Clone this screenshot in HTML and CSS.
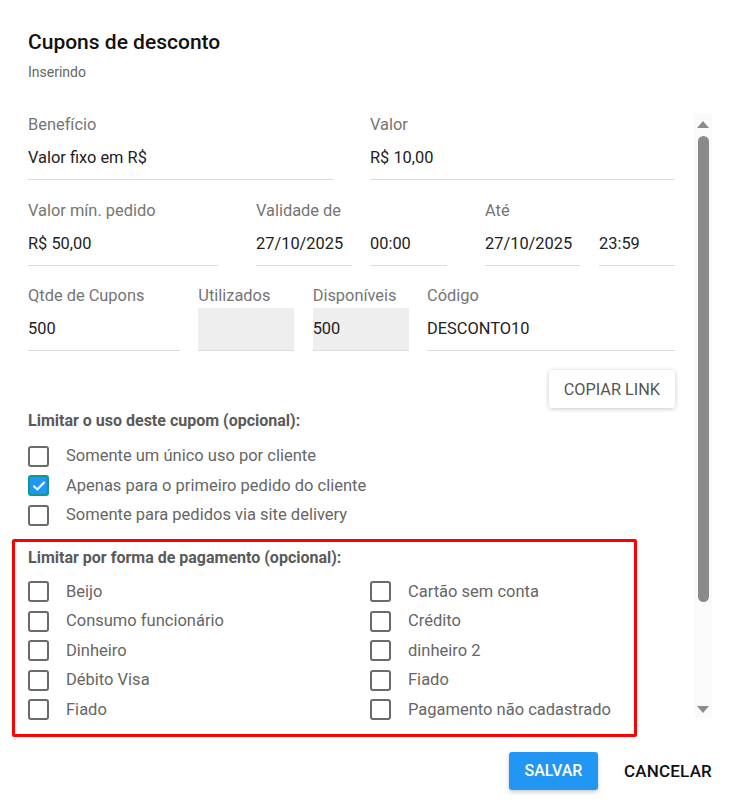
FILE: index.html
```html
<!DOCTYPE html>
<html lang="pt-BR">
<head>
<meta charset="utf-8">
<title>Cupons de desconto</title>
<link rel="stylesheet" href="styles.css">
</head>
<body>
<div class="dialog">
  <div class="head">
    <h1 class="title">Cupons de desconto</h1>
    <div class="subtitle">Inserindo</div>
  </div>

  <div class="body">
    <div class="form">
      <div class="row row-a">
        <div class="field">
          <div class="field-label">Benefício</div>
          <div class="field-input">Valor fixo em R$</div>
        </div>
        <div class="field">
          <div class="field-label">Valor</div>
          <div class="field-input">R$ 10,00</div>
        </div>
      </div>

      <div class="row row-b">
        <div class="field">
          <div class="field-label">Valor mín. pedido</div>
          <div class="field-input">R$ 50,00</div>
        </div>
        <div class="field">
          <div class="field-label">Validade de</div>
          <div class="field-input">27/10/2025</div>
        </div>
        <div class="field">
          <div class="field-label">&nbsp;</div>
          <div class="field-input">00:00</div>
        </div>
        <div class="field">
          <div class="field-label">Até</div>
          <div class="field-input">27/10/2025</div>
        </div>
        <div class="field">
          <div class="field-label">&nbsp;</div>
          <div class="field-input">23:59</div>
        </div>
      </div>

      <div class="row row-c">
        <div class="field">
          <div class="field-label">Qtde de Cupons</div>
          <div class="field-input">500</div>
        </div>
        <div class="field">
          <div class="field-label">Utilizados</div>
          <div class="field-input readonly">&nbsp;</div>
        </div>
        <div class="field">
          <div class="field-label">Disponíveis</div>
          <div class="field-input readonly">500</div>
        </div>
        <div class="field">
          <div class="field-label">Código</div>
          <div class="field-input">DESCONTO10</div>
        </div>
      </div>

      <div class="link-row">
        <button class="btn-raised">COPIAR LINK</button>
      </div>

      <div class="section-title first">Limitar o uso deste cupom (opcional):</div>
      <div class="checks">
        <label class="check-row"><span class="box"></span><span class="check-label">Somente um único uso por cliente</span></label>
        <label class="check-row"><span class="box checked"><svg viewBox="0 0 16 16" width="16" height="16"><path d="M3.2 8.4 L6.4 11.4 L12.8 4.8" fill="none" stroke="#fff" stroke-width="2.1" stroke-linecap="square"/></svg></span><span class="check-label">Apenas para o primeiro pedido do cliente</span></label>
        <label class="check-row"><span class="box"></span><span class="check-label">Somente para pedidos via site delivery</span></label>
      </div>

      <div class="payment">
        <div class="section-title">Limitar por forma de pagamento (opcional):</div>
        <div class="pay-grid">
          <div class="pay-col">
            <label class="check-row"><span class="box"></span><span class="check-label">Beijo</span></label>
            <label class="check-row"><span class="box"></span><span class="check-label">Consumo funcionário</span></label>
            <label class="check-row"><span class="box"></span><span class="check-label">Dinheiro</span></label>
            <label class="check-row"><span class="box"></span><span class="check-label">Débito Visa</span></label>
            <label class="check-row"><span class="box"></span><span class="check-label">Fiado</span></label>
          </div>
          <div class="pay-col">
            <label class="check-row"><span class="box"></span><span class="check-label">Cartão sem conta</span></label>
            <label class="check-row"><span class="box"></span><span class="check-label">Crédito</span></label>
            <label class="check-row"><span class="box"></span><span class="check-label">dinheiro 2</span></label>
            <label class="check-row"><span class="box"></span><span class="check-label">Fiado</span></label>
            <label class="check-row"><span class="box"></span><span class="check-label">Pagamento não cadastrado</span></label>
          </div>
        </div>
      </div>
    </div>

    <div class="scrollbar">
      <span class="arrow-up"></span>
      <span class="thumb"></span>
      <span class="spacer"></span>
      <span class="arrow-down"></span>
    </div>
  </div>

  <div class="footer">
    <button class="btn-save">SALVAR</button>
    <button class="btn-cancel">CANCELAR</button>
  </div>
</div>
</body>
</html>
```

FILE: styles.css
```css
* { box-sizing: border-box; }

html, body {
  margin: 0;
  padding: 0;
  background: #fff;
}

body {
  font-family: Roboto, "Liberation Sans", Arial, sans-serif;
  color: #222;
  width: 738px;
  height: 804px;
  overflow: hidden;
}

.dialog {
  padding-top: 30px;
}

.head {
  padding-left: 28px;
}

.title {
  margin: 0;
  font-size: 21px;
  line-height: 24px;
  font-weight: 500;
  color: #111;
}

.subtitle {
  margin-top: 10px;
  font-size: 14px;
  line-height: 16px;
  color: #666;
}

.body {
  display: flex;
  align-items: flex-start;
  margin-top: 33px;
}

.form {
  margin-left: 28px;
  width: 647px;
  padding-top: 2px;
}

.row {
  display: grid;
  margin-bottom: 20.5px;
}

.row-a { grid-template-columns: 305px 305px; column-gap: 37px; }
.row-b { grid-template-columns: 190px 134px 95px 133px 95px; }
.row-b .field:nth-child(2) { margin-left: 38px; width: 96px; }
.row-b .field:nth-child(3) { margin-left: 18px; width: 77px; }
.row-b .field:nth-child(4) { margin-left: 38px; width: 95px; }
.row-b .field:nth-child(5) { margin-left: 19px; width: 76px; }
.row-c { grid-template-columns: 152px 96px 96px 248px; column-gap: 18.33px; }

.field-label {
  font-size: 16.4px;
  line-height: 20px;
  height: 20px;
  margin-bottom: 2px;
  color: #757575;
  white-space: nowrap;
}

.field-input {
  font-size: 16.4px;
  line-height: 20px;
  padding: 11px 0 11px;
  color: #222;
  border-bottom: 1px solid #dcdcdc;
  white-space: nowrap;
}

.field-input.readonly {
  background: #eeeeee;
}

.link-row {
  display: flex;
  justify-content: flex-end;
  margin-top: -1.5px;
}

.btn-raised {
  height: 38px;
  padding: 0 15px;
  border: none;
  border-radius: 3px;
  background: #fff;
  font-family: inherit;
  font-size: 16.3px;
  color: #555;
  box-shadow: 0 1px 5px rgba(0, 0, 0, 0.22);
}

.section-title {
  font-size: 16px;
  line-height: 20px;
  font-weight: 700;
  color: #5a5a5a;
}

.section-title.first {
  margin-top: 3px;
}

.checks {
  margin-top: 10.5px;
}

.check-row {
  display: flex;
  align-items: center;
  height: 29.5px;
}

.box {
  width: 21px;
  height: 21px;
  border: 2px solid #6a6a6a;
  border-radius: 3px;
  flex: none;
  display: flex;
  align-items: center;
  justify-content: center;
}

.box.checked {
  background: #2196f3;
  border-color: #13978a;
}

.check-label {
  margin-left: 17px;
  font-size: 16.5px;
  line-height: 20px;
  color: #666;
  white-space: nowrap;
}

.payment {
  margin-top: 9px;
  margin-left: -16px;
  width: 625px;
  border: 3px solid #ff0000;
  border-radius: 2px;
  padding: 6px 0 9px 13px;
}

.pay-grid {
  display: grid;
  grid-template-columns: 305px 264px;
  column-gap: 37px;
  margin-top: 9px;
}

.scrollbar {
  margin-left: 19px;
  width: 18px;
  height: 605px;
  background: #fafafa;
  display: flex;
  flex-direction: column;
  align-items: center;
  padding: 8px 0 5px;
}

.arrow-up {
  width: 0;
  height: 0;
  border-left: 6px solid transparent;
  border-right: 6px solid transparent;
  border-bottom: 7px solid #8c8c8c;
}

.thumb {
  margin-top: 8px;
  width: 11px;
  height: 466px;
  border-radius: 6px;
  background: #8a8a8a;
}

.spacer { flex: 1; }

.arrow-down {
  width: 0;
  height: 0;
  border-left: 6px solid transparent;
  border-right: 6px solid transparent;
  border-top: 7px solid #8c8c8c;
}

.footer {
  display: flex;
  justify-content: flex-end;
  align-items: center;
  margin-top: 15px;
  padding-right: 10px;
}

.btn-save {
  width: 89px;
  height: 38px;
  border: none;
  border-radius: 3px;
  background: #2196f3;
  color: #fff;
  font-family: inherit;
  font-size: 16px;
  font-weight: 500;
  box-shadow: 0 2px 4px rgba(0, 0, 0, 0.22);
}

.btn-cancel {
  margin-left: 10px;
  height: 38px;
  padding: 0 16px;
  border: none;
  background: transparent;
  color: #111;
  font-family: inherit;
  font-size: 17px;
  font-weight: 500;
  letter-spacing: 0.2px;
}
```
